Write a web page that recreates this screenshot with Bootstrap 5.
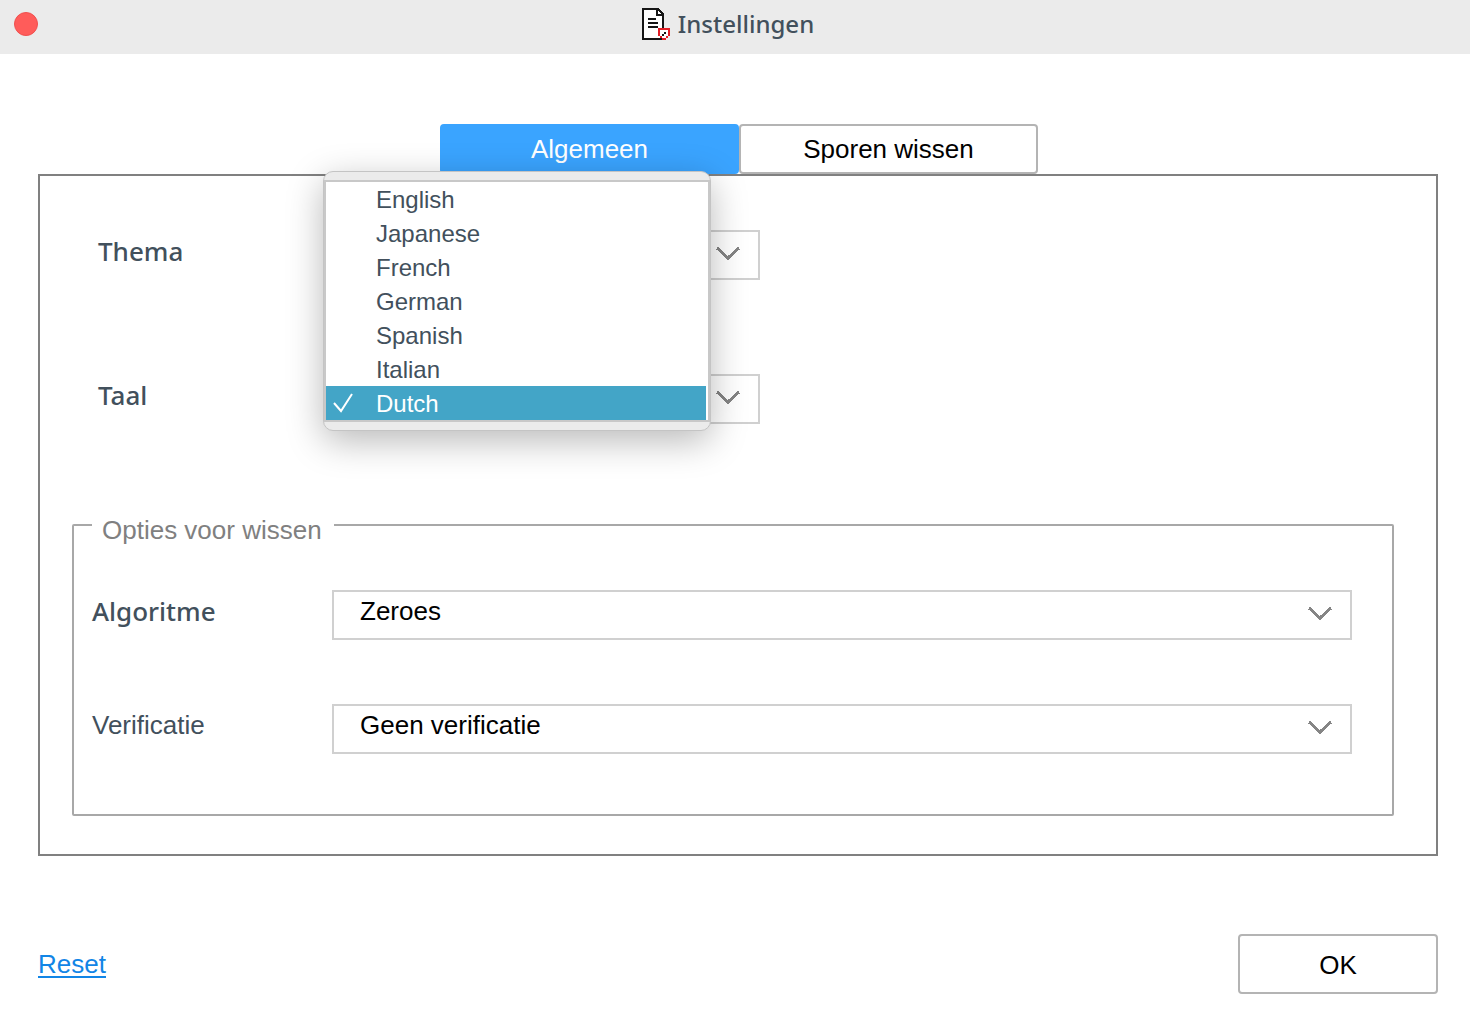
<!DOCTYPE html>
<html lang="nl">
<head>
<meta charset="utf-8">
<meta name="viewport" content="width=device-width, initial-scale=1">
<title>Instellingen</title>
<link href="https://cdn.jsdelivr.net/npm/bootstrap@5.3.0/dist/css/bootstrap.min.css" rel="stylesheet">
<style>
body { font-family: "Liberation Sans", Arial, sans-serif; font-size: 26px; line-height: 30px; color: #000; background: #fff; }
.titlebar { height: 54px; background: #ebebeb; color: #42505c; font: 500 24px/30px "Noto Sans", sans-serif; padding-bottom: 6px; }
.title-text { margin-right: 14px; }
.close-dot { left: 14px; top: 12px; width: 24px; height: 24px; border: 1px solid #f0504f; background: #ff5c5a; }
.window-body { padding: 70px 32px 34px 38px; }
.tab-strip { margin-left: 2px; z-index: 1; }
.tab-strip .nav-link { width: 299px; height: 50px; padding: 0; color: #000; border: 2px solid #b4b4b4; border-radius: 4px; background: #fff; line-height: 30px; }
.tab-strip .nav-link.active { background: #3aa4ff; color: #fff; border-color: #3aa4ff; }
.panel { border: 2px solid #808080; padding: 54px 42px 38px 32px; }
.plain-rows { padding-left: 26px; gap: 94px; }
.field-label { color: #42505c; line-height: 30px; padding-bottom: 8px; flex: none; }
.humanist { font-family: "Noto Sans", sans-serif; font-weight: 500; }
.plain-rows .field-label { width: 234px; }
.options .field-label { width: 240px; }
.form-select { height: 50px; border: 2px solid #d0d0d0; border-radius: 0; padding: 0 60px 8px 26px; font-size: 26px; line-height: 30px; color: #000;
  background-image: url("data:image/svg+xml,%3Csvg xmlns='http://www.w3.org/2000/svg' viewBox='0 0 24 14' shape-rendering='crispEdges'%3E%3Cpath d='M1 1l11 10L23 1' fill='none' stroke='%23858585' stroke-width='3'/%3E%3C/svg%3E");
  background-size: 24px 14px; background-position: right 18px top 15px; }
.short-select { width: 428px; }
.language-menu { left: -9px; bottom: -7px; width: 388px; padding: 8px 0; background: #ebebeb; border: 1px solid #c4c4c4; border-radius: 10px; box-shadow: 0 10px 36px rgba(0,0,0,.28); }
.menu-list { border: 2px solid #c8c8c8; background: #fff; padding-right: 2px; }
.language-menu .dropdown-item { height: 34px; padding: 2px 0 0 50px; font-size: 24px; line-height: 32px; color: #42505c; }
.language-menu .dropdown-item.active { background: #43a5c7; color: #fff; }
.check-mark { left: 7px; top: 7px; }
.options { border: 2px solid #a8a8a8; border-radius: 2px; margin-top: 81px; padding: 45px 40px 60px 18px; }
.options legend { font-size: 26px; line-height: 30px; color: #808080; padding: 10px 12px 0 10px; margin: 0; }
.option-rows { gap: 64px; }
.window-footer { margin-top: 78px; }
.reset-link { color: #1285e6; text-decoration: none; border-bottom: 2px solid #1285e6; line-height: 24px; margin-top: 2px; }
.ok-button { width: 200px; height: 60px; border: 2px solid #b4b4b4; border-radius: 4px; padding: 2px 0 0; font-size: 26px; line-height: 30px; color: #000; background: #fff; }
</style>
</head>
<body>
<header class="titlebar position-relative d-flex align-items-center justify-content-center">
  <button type="button" class="close-dot position-absolute rounded-circle p-0" aria-label="Sluiten"></button>
  <div class="title-text d-flex align-items-center gap-2">
    <svg width="28" height="32" viewBox="0 0 28 32" shape-rendering="crispEdges" aria-hidden="true">
      <path d="M1 1h15l5 5v25H1z" fill="#fff" stroke="#151515" stroke-width="2"/>
      <path d="M15 1v6h6M6 11h8M6 15h10M6 19h10" fill="none" stroke="#151515" stroke-width="2"/>
      <path d="M16 20h12v8h-2v2h-2v2h-4v-2h-2v-2h-2z" fill="#e31e26"/>
      <path d="M18 22h8v6h-2v2h-4v-2h-2z" fill="#fff"/>
      <path d="M20 26h2v-2h2v2h-2v2h-2z" fill="#151515"/>
    </svg>
    <span>Instellingen</span>
  </div>
</header>
<main class="window-body">
  <ul class="nav justify-content-center tab-strip position-relative">
    <li><button type="button" class="nav-link active">Algemeen</button></li>
    <li><button type="button" class="nav-link">Sporen wissen</button></li>
  </ul>
  <section class="panel">
    <div class="plain-rows d-flex flex-column">
      <div class="d-flex align-items-center">
        <label class="field-label humanist" for="theme">Thema</label>
        <select class="form-select short-select" id="theme"><option>Blauw</option></select>
      </div>
      <div class="d-flex align-items-center">
        <label class="field-label humanist" for="language">Taal</label>
        <div class="position-relative">
          <select class="form-select short-select" id="language"><option>Dutch</option></select>
          <div class="dropdown-menu language-menu d-block">
            <div class="menu-list">
              <button type="button" class="dropdown-item">English</button>
              <button type="button" class="dropdown-item">Japanese</button>
              <button type="button" class="dropdown-item">French</button>
              <button type="button" class="dropdown-item">German</button>
              <button type="button" class="dropdown-item">Spanish</button>
              <button type="button" class="dropdown-item">Italian</button>
              <button type="button" class="dropdown-item active position-relative">
                <svg class="check-mark position-absolute" width="20" height="20" viewBox="0 0 20 20" aria-hidden="true"><path d="M1 10l7 8L19 1" fill="none" stroke="#fff" stroke-width="2"/></svg>Dutch</button>
            </div>
          </div>
        </div>
      </div>
    </div>
    <fieldset class="options">
      <legend class="float-none w-auto">Opties voor wissen</legend>
      <div class="option-rows d-flex flex-column">
        <div class="d-flex align-items-center">
          <label class="field-label humanist" for="algorithm">Algoritme</label>
          <select class="form-select" id="algorithm"><option>Zeroes</option></select>
        </div>
        <div class="d-flex align-items-center">
          <label class="field-label" for="verification">Verificatie</label>
          <select class="form-select" id="verification"><option>Geen verificatie</option></select>
        </div>
      </div>
    </fieldset>
  </section>
  <footer class="window-footer d-flex align-items-center justify-content-between">
    <a class="reset-link" href="#">Reset</a>
    <button type="button" class="btn ok-button">OK</button>
  </footer>
</main>
<script src="https://cdn.jsdelivr.net/npm/bootstrap@5.3.0/dist/js/bootstrap.bundle.min.js"></script>
</body>
</html>
